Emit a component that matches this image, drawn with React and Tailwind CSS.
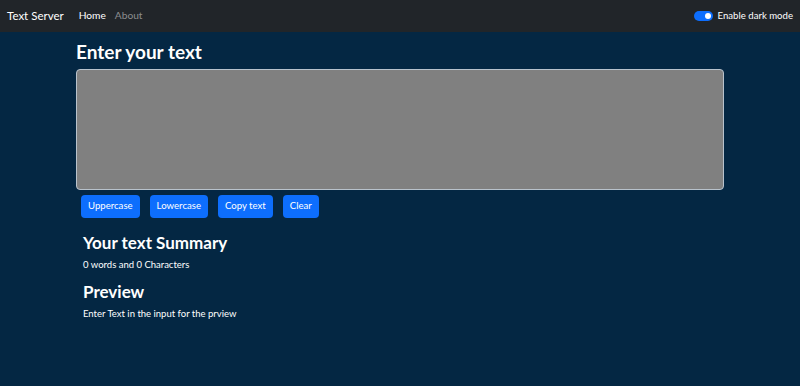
import React, { useState } from "react";

const font = { fontFamily: 'Lato, "Noto Sans", sans-serif' };

const Navbar = ({ dark, onToggle }) => {
  return (
    <nav className="flex h-[32px] items-center justify-between bg-[#212529] px-[7px]">
      <div className="flex items-center">
        <span className="mr-[15px] text-[11.5px] text-white">Text Server</span>
        <a href="#" className="mr-[9px] text-[10.2px] text-white">
          Home
        </a>
        <a href="#" className="text-[10.2px] text-[#8c8d8f]">
          About
        </a>
      </div>
      <label className="flex items-center">
        <button
          onClick={onToggle}
          className="mr-[5px] flex h-[10px] w-[19px] items-center justify-end rounded-full bg-[#0d6efd] px-[2px]"
        >
          <span className="h-[6px] w-[6px] rounded-full bg-white" />
        </button>
        <span className="text-[9.6px] text-white">Enable dark mode</span>
      </label>
    </nav>
  );
};

export default function App() {
  const [text, setText] = useState("");
  const [dark, setDark] = useState(true);

  const words = text.split(/\s+/).filter((w) => w.length > 0).length;

  return (
    <div className="min-h-[386px] bg-[#042743]" style={font}>
      <Navbar dark={dark} onToggle={() => setDark(!dark)} />
      <div className="mx-auto w-[648px]">
        <h1 className="mb-[5px] mt-[8px] text-[19px] font-bold leading-[24px] text-white">
          Enter your text
        </h1>
        <textarea
          value={text}
          onChange={(e) => setText(e.target.value)}
          className="block h-[121px] w-full resize-none rounded-[4px] border border-[#b8c2cc] bg-[#808080] text-white"
        />
        <div className="mt-[5px] flex gap-[10px] pl-[5px]">
          {["Uppercase", "Lowercase", "Copy text", "Clear"].map((label) => (
            <button
              key={label}
              className="h-[23px] rounded-[4px] bg-[#0d6efd] px-[7px] text-[9.6px] text-white"
            >
              {label}
            </button>
          ))}
        </div>
        <div className="mt-[14px] pl-[7px] text-white">
          <h2 className="text-[17px] font-bold leading-[22px]">Your text Summary</h2>
          <p className="mt-[4px] text-[9.5px] leading-[14px]">
            {words} words and {text.length} Characters
          </p>
          <h2 className="mt-[9px] text-[17px] font-bold leading-[22px]">Preview</h2>
          <p className="mt-[4px] text-[9.5px] leading-[14px]">
            {text.length > 0 ? text : "Enter Text in the input for the prview"}
          </p>
        </div>
      </div>
    </div>
  );
}
